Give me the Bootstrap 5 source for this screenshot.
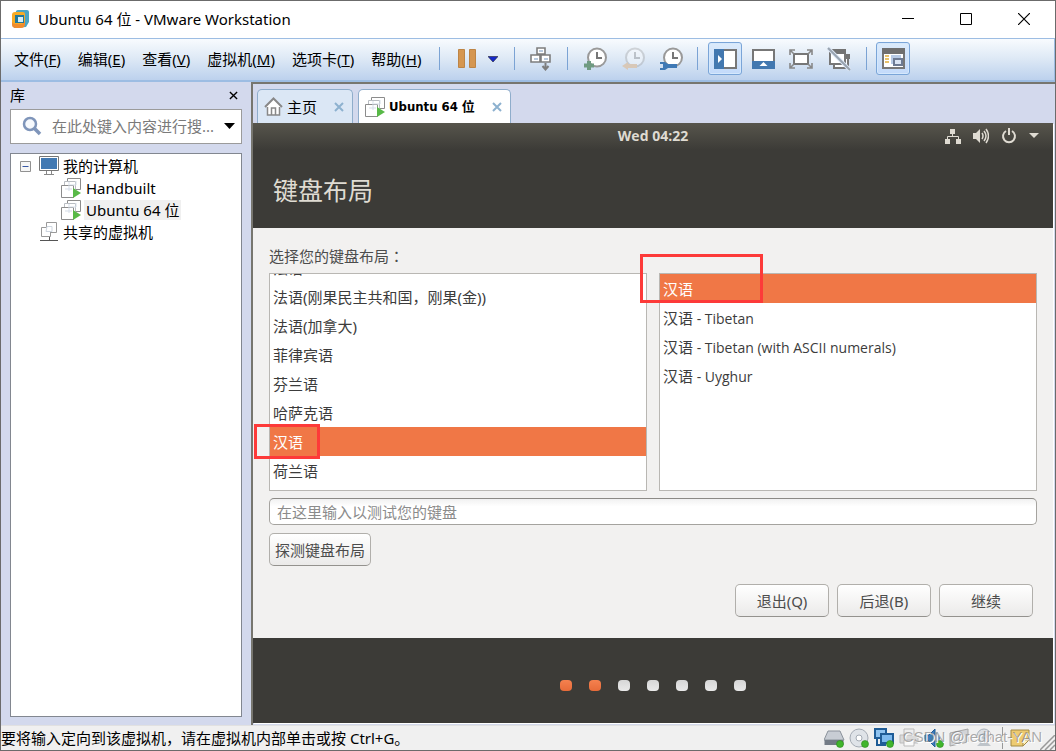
<!DOCTYPE html>
<html lang="zh-CN">
<head>
<meta charset="utf-8">
<meta name="viewport" content="width=device-width, initial-scale=1">
<title>Ubuntu 64 位 - VMware Workstation</title>
<link href="https://cdn.jsdelivr.net/npm/bootstrap@5.3.0/dist/css/bootstrap.min.css" rel="stylesheet">
<style>
body { font: 15px/20px "Noto Sans", "Noto Sans CJK SC", sans-serif; color: #000; background: #d3d9ed; }
button { color: inherit; font: inherit; background: none; border: 0; padding: 0; }
svg { display: block; flex: none; }
.app { border: 1px solid #6b6b6b; min-height: 100vh; }
.titlebar { height: 37px; padding: 0 2px 1px 10px; }
.caption-btn { width: 58px; height: 36px; display: grid; place-items: center; }
.toolbar { height: 44px; border: solid #9dbde3; border-width: 1px 1px 2px 0; background: linear-gradient(#f8fbfe, #dfeaf6 45%, #bcd1ed); padding: 0 0 2px 13px; }
.menus { gap: 17px; width: 417px; }
.tsep { width: 1px; height: 23px; background: #7ba3d4; }
.tool { width: 34px; height: 33px; display: grid; place-items: center; border-radius: 3px; }
.tool.on { border: 1px solid #7aa5d8; background: linear-gradient(#dcebfb, #c3dafa); box-shadow: inset 0 0 0 1px #d5e8fc; }
.power-tools { gap: 12px; margin: 0 16px 0 18px; }
.power-tools .tool { width: auto; }
.send-keys { margin: 0 9px; }
.snap-tools { gap: 4px; margin: 0 9px 0 10px; }
.view-tools { gap: 4px; margin: 0 10px; }
.library { width: 250px; padding: 0 9px 8px; }
.lib-head { height: 27px; padding-bottom: 1px; }
.search { height: 35px; border: 1px solid #9b9b9b; background: #fff; padding: 0 6px 1px 11px; }
.search input { border: 0; outline: 0; min-width: 0; padding: 0; margin-left: 10px; text-overflow: ellipsis; }
.search input::placeholder { color: #7a7a7a; opacity: 1; }
.tree { border: 1px solid #828790; background: #fff; margin-top: 9px; padding: 1px 9px; }
.tree li { height: 22px; }
.tree .vm-row { padding-left: 41px; gap: 3px; }
.tree .vm-name { padding: 0 2px; }
.tree .picked { background: #f0f0f0; }
.work { border: solid #77766f; border-width: 2px 0 0 2px; }
.tabs { height: 39px; padding-left: 4px; gap: 5px; }
.vtab { height: 34px; border: 1px solid #8fadcb; border-bottom: 0; border-radius: 5px 5px 0 0; background: #dbe7f5; padding: 0 8px 0 6px; }
.vtab a { margin: 0 17px 0 4px; }
.vtab button { color: #8db1cf; }
.vtab.current { background: #fff; font-family: "DejaVu Sans Condensed", "Noto Sans CJK SC", sans-serif; font-weight: 700; font-size: 13px; }
.guest { background: #3c3b37; color: #4c4c4c; margin: 0 2px 2px 0; box-shadow: 1px 1px 0 #fff; }
.panel-top { height: 27px; padding-bottom: 2px; background: linear-gradient(#57554c, #3c3b37); color: #dfdbd2; font-family: "Open Sans", sans-serif; font-weight: 700; font-size: 14px; }
.panel-icons { right: 14px; gap: 12px; }
.page-title { height: 78px; color: #dfdbd2; font-size: 25px; line-height: 30px; padding: 25px 20px 0; }
.page-body { background: #f2f1f0; padding: 18px 16px 21px; }
.tc { font-family: "Noto Sans CJK TC", sans-serif; }
.lists { gap: 12px; margin-top: 7px; }
.pick { border: 1px solid #b9b7b3; background: #fff; min-height: 216px; overflow: hidden; }
.pick .list-group-item { height: 29px; border: 0; padding: 5px 3px 4px; background: none; color: #3c3c3c; line-height: 20px; }
.pick .list-group-item.active { background: #f07746; color: #fff; margin-top: 0; }
.latin { font-size: 14px; font-family: "Open Sans", "Noto Sans CJK SC", sans-serif; }
.latin b { font-size: 15px; font-weight: 400; }
.scrolled { margin-top: -21px; }
.marker { border: 3px solid #fd3a39; z-index: 2; pointer-events: none; }
.marker-a { left: -15px; top: 151px; width: 66px; height: 35px; }
.marker-b { left: -19px; top: -19px; width: 123px; height: 49px; }
.probe { height: 27px; border: 1px solid #a5a39f; border-top-color: #8c8a86; border-radius: 5px; background: linear-gradient(#f1f1f1, #fff 30%); padding: 0 7px; margin-top: 7px; }
.probe::placeholder { color: #8b8b8b; opacity: 1; }
.gbtn { height: 33px; min-width: 94px; border: 1px solid #b1afab; border-bottom-color: #94928e; border-radius: 5px; background: linear-gradient(#fff, #ebeae9); padding: 0 5px; }
.page-nav { gap: 8px; margin-top: 18px; }
.steps { height: 85px; gap: 17px; padding: 10px 0 0; }
.step { width: 12px; height: 11px; border-radius: 4px; background: linear-gradient(#d6d6d6, #e9e9e9); }
.step.done { background: linear-gradient(#f5814f, #e76b39); }
.status { height: 25px; background: #f0f0f0; padding-right: 24px; border-top: 1px solid #e1e1e1; }
.watermark { right: 13px; top: 0; color: #77777799; font: 15px/22px "Liberation Sans", sans-serif; text-shadow: 1px 1px 0 #fff; }
.grip { right: 0; bottom: 0; }
</style>
</head>
<body>
<svg width="0" height="0" class="position-absolute" aria-hidden="true">
  <symbol id="vm" viewBox="0 0 20 20"><g fill="#fff" stroke="#8c8c8c"><path d="M6.500 .5h13v11h-13z"/><path d="M3.500 3.500h11v11h-11z" stroke="#b9bdc2"/><path d="M.5 7.500h12v12H.5z"/></g><path d="M8 4v9M4 11h7M9 7h6V3" stroke="#d5dde8" fill="none"/><path d="M12 10l8 5-8 5z" fill="#58b947"/></symbol>
  <symbol id="clock" viewBox="0 0 24 24"><circle cx="14" cy="10.500" r="9" fill="#fff" stroke="#999" stroke-width="2"/><path d="M14 5v6h5" fill="none" stroke="#777" stroke-width="2"/></symbol>
  <symbol id="x" viewBox="0 0 10 10"><path d="M1 1l8 8M9 1L1 9" stroke="currentColor" stroke-width="2" fill="none"/></symbol>
  <symbol id="ok" viewBox="0 0 8 8"><circle cx="4" cy="4" r="3.500" fill="#41b52c" stroke="#2c8a1c" stroke-width=".6"/></symbol>
</svg>
<div class="app d-flex flex-column text-nowrap">
  <header class="titlebar d-flex align-items-center bg-white">
    <svg width="19" height="19" viewBox="0 0 19 19"><path d="M5 1q1-1 2-1h9q2 0 2 2v10l-3 5-12 1z" fill="#4aa5c4"/><path d="M1 5q0-3 3-3h8q2 0 2 2v9q0 3-3 3H4q-3 0-3-3z" fill="#f6ab25"/><path d="M1 12q1 2 4 2h6l3-3v3q0 4-4 4H5q-4 0-4-3z" fill="#f08c2d"/><path d="M4 5h9v8H4z" fill="#1f789b"/><path d="M7 7h5v5H7z" fill="#d8edf5"/></svg>
    <span class="ms-1 ps-1">Ubuntu 64 位 - VMware Workstation</span>
    <div class="ms-auto d-flex">
      <button class="caption-btn" aria-label="最小化"><svg width="12" height="12"><path d="M0 5.500h12" stroke="#000"/></svg></button>
      <button class="caption-btn" aria-label="最大化"><svg width="12" height="12"><path d="M.5.5h11v11H.5z" fill="none" stroke="#000"/></svg></button>
      <button class="caption-btn" aria-label="关闭"><svg width="12" height="12"><path d="M0 0l12 12M12 0L0 12" stroke="#000" stroke-width="1.200"/></svg></button>
    </div>
  </header>

  <div class="toolbar d-flex align-items-center">
    <nav class="menus d-flex">
      <button>文件(<u>F</u>)</button><button>编辑(<u>E</u>)</button><button>查看(<u>V</u>)</button><button>虚拟机(<u>M</u>)</button><button>选项卡(<u>T</u>)</button><button>帮助(<u>H</u>)</button>
    </nav>
    <span class="tsep ms-2"></span>
    <div class="power-tools d-flex">
      <button class="tool" aria-label="挂起"><svg width="18" height="19"><path d="M.5.5h6v18h-6zM11.500.5h6v18h-6z" fill="#d59650" stroke="#bd8445"/></svg></button>
      <button class="tool" aria-label="电源选项"><svg width="10" height="6"><path d="M0 .5h10L5 6z" fill="#1529c9" stroke="#223" stroke-width=".6"/></svg></button>
    </div>
    <span class="tsep"></span>
    <button class="tool send-keys" aria-label="发送 Ctrl+Alt+Del"><svg width="22" height="24" viewBox="0 0 22 24"><g fill="#fff" stroke="#7d7d7d" stroke-width="1.600"><path d="M7 1h8v6H7zM1 8h9v7H1zM11 8h9v7h-9z"/></g><path d="M9 4h4M4 12h4M14 12h4" stroke="#b9cbe0" stroke-width="2"/><path d="M15.500 16v6m-3-3l3 3.500 3-3.500" stroke="#7d7d7d" fill="none" stroke-width="2"/></svg></button>
    <span class="tsep"></span>
    <div class="snap-tools d-flex">
      <button class="tool" aria-label="拍摄快照"><svg width="24" height="24"><use href="#clock"/><path d="M6 14v9M1 18.500h10" stroke="#709b82" stroke-width="4"/></svg></button>
      <button class="tool" aria-label="恢复快照"><svg width="24" height="24"><use href="#clock" opacity=".35"/><path d="M1 19l6-4v2h9v4H7v2z" fill="#d8c8b8"/></svg></button>
      <button class="tool" aria-label="管理快照"><svg width="24" height="24"><use href="#clock"/><path d="M1 15h5l3 2h9v4H9l-3 2H1v-2h3v-4H1z" fill="#3f79b5"/></svg></button>
    </div>
    <span class="tsep"></span>
    <div class="view-tools d-flex">
      <button class="tool on" aria-label="显示库"><svg width="23" height="20"><path d="M1 1h21v18H1z" fill="#fff" stroke="#777" stroke-width="2"/><path d="M0 0h10v20H0z" fill="#4278b0"/><path d="M4 6l4 4-4 4z" fill="#fff"/></svg></button>
      <button class="tool" aria-label="缩略图栏"><svg width="23" height="20"><path d="M1 1h21v18H1z" fill="#fff" stroke="#777" stroke-width="2"/><path d="M0 12h23v8H0z" fill="#4278b0"/><path d="M7.500 17l4-4 4 4z" fill="#fff"/></svg></button>
      <button class="tool" aria-label="全屏"><svg width="24" height="20"><path d="M5 5h14v10H5z" fill="#fff" stroke="#777" stroke-width="2"/><path d="M1 6V1h5M18 1h5v5M23 14v5h-5M6 19H1v-5M1 1l4 4M23 1l-4 4M1 19l4-4M23 19l-4-4" fill="none" stroke="#888" stroke-width="1.600"/></svg></button>
      <button class="tool" aria-label="Unity"><svg width="24" height="24"><path d="M7 9h14v12H7z" fill="#fff" stroke="#777" stroke-width="2"/><path d="M17 7h6v5h-6z" fill="#737373"/><path d="M3 4h15v13H3z" fill="#fff" stroke="#777" stroke-width="2"/><path d="M2 2h17v5H2z" fill="#737373"/><path d="M1 1l22 22" stroke="#dce7f4" stroke-width="4"/><path d="M1 1l22 22" stroke="#98a3af" stroke-width="2"/></svg></button>
    </div>
    <span class="tsep"></span>
    <button class="tool on send-keys" aria-label="控制台视图"><svg width="23" height="21"><path d="M1 1h21v19H1z" fill="#fff" stroke="#777" stroke-width="2"/><path d="M0 0h23v6H0z" fill="#6f6f6f"/><path d="M3 8h4M3 11h4M3 14h4" stroke="#e8c26a" stroke-width="2"/><path d="M9 7h10v9H9z" fill="#b7cae5"/><path d="M12 11h8v6h-8z" fill="#dbe5f4" stroke="#6d7a92" stroke-width="2"/></svg></button>
  </div>

  <main class="d-flex flex-grow-1">
    <aside class="library d-flex flex-column flex-shrink-0">
      <div class="lib-head d-flex align-items-center justify-content-between"><span>库</span>
        <button class="pe-1" aria-label="关闭库"><svg width="9" height="9" viewBox="0 0 10 10"><path d="M1 1l8 8M9 1L1 9" stroke="#000" stroke-width="1.500"/></svg></button></div>
      <div class="search d-flex align-items-center">
        <svg width="20" height="20"><circle cx="8" cy="8" r="6" fill="#f6f9fd" stroke="#7f95ba" stroke-width="2.500"/><path d="M12 12l6 6" stroke="#7f95ba" stroke-width="3.500"/></svg>
        <input class="flex-grow-1" type="text" aria-label="搜索" placeholder="在此处键入内容进行搜...">
        <button class="ms-1" aria-label="搜索选项"><svg width="11" height="6"><path d="M0 0h11L5.500 6z"/></svg></button>
      </div>
      <ul class="tree list-unstyled mb-0 flex-grow-1">
        <li class="d-flex align-items-center"><svg width="11" height="11"><path d="M.5.5h10v10H.5z" fill="#f6f6f6" stroke="#919191"/><path d="M2.500 5.500h6" stroke="#3858a5"/></svg>
          <svg class="ms-2" width="20" height="20"><path d="M.5.5h19v14H.5z" fill="#fff" stroke="#777"/><path d="M2 2h16v11H2z" fill="#4279b2"/><path d="M7.500 15v3M12.500 15v3M5 18.500h10" stroke="#888"/></svg><span class="ms-1">我的计算机</span></li>
        <li class="vm-row d-flex align-items-center"><svg width="20" height="20"><use href="#vm"/></svg><span class="vm-name">Handbuilt</span></li>
        <li class="vm-row d-flex align-items-center"><svg width="20" height="20"><use href="#vm"/></svg><span class="vm-name picked">Ubuntu 64 位</span></li>
        <li class="d-flex align-items-center ps-3"><span class="ms-1"></span><svg width="19" height="20"><g fill="#fff" stroke="#999"><path d="M6.500.5h10v10h-10z"/><path d="M1.500 5.500h9v9h-9z"/><path d="M7 4.500h5v5H6z" stroke="#cdd5df"/></g><path d="M0 18.500h18M9.500 15v4" stroke="#555"/></svg><span class="ms-1">共享的虚拟机</span></li>
      </ul>
    </aside>

    <section class="work flex-grow-1 d-flex flex-column">
      <div class="tabs d-flex align-items-end">
        <div class="vtab d-flex align-items-center"><svg width="19" height="19"><path d="M3.500 9v9h12V9" fill="#fff" stroke="#888" stroke-width="1.500"/><path d="M1 10L9.500 1.500 18 10" fill="#fff" stroke="#888" stroke-width="2"/><path d="M7.500 18v-7h4v7" fill="none" stroke="#888" stroke-width="1.500"/></svg>
          <a href="#" class="text-reset text-decoration-none">主页</a><button aria-label="关闭主页"><svg width="10" height="10"><use href="#x"/></svg></button></div>
        <div class="vtab current d-flex align-items-center"><svg width="20" height="20"><use href="#vm"/></svg>
          <a href="#" class="text-reset text-decoration-none">Ubuntu 64 位</a><button aria-label="关闭 Ubuntu"><svg width="10" height="10"><use href="#x"/></svg></button></div>
      </div>
      <div class="guest flex-grow-1 d-flex flex-column">
        <div class="panel-top position-relative d-flex align-items-center justify-content-center">Wed 04:22
          <div class="panel-icons position-absolute d-flex align-items-center">
            <svg width="16" height="16" fill="#dfdbd2"><path d="M5 1h5v5H5zM0 11h5v5H0zM11 11h5v5h-5z"/><path d="M7.500 6v3M2.500 11V8.500h11V11" fill="none" stroke="#dfdbd2"/></svg>
            <svg width="16" height="16"><path d="M0 5h3l4-4v14l-4-4H0z" fill="#dfdbd2"/><path d="M9 5q2 3 0 6M11 3q4 5 0 10M13 1q5 7 0 14" fill="none" stroke="#dfdbd2" stroke-width="1.500"/></svg>
            <svg width="16" height="16"><path d="M5 3a6 6 0 1 0 6 0M8 0v7" fill="none" stroke="#dfdbd2" stroke-width="2"/></svg>
            <svg width="10" height="5"><path d="M0 0h10L5 5z" fill="#dfdbd2"/></svg>
          </div>
        </div>
        <h1 class="page-title m-0 fw-normal">键盘布局</h1>
        <div class="page-body flex-grow-1 d-flex flex-column">
          <div>选择您的键盘布局<span class="tc" lang="zh-TW">：</span></div>
          <div class="lists d-flex flex-grow-1">
            <div class="position-relative flex-fill w-50 d-flex">
              <div class="pick w-100">
                <div class="list-group list-group-flush scrolled">
                  <button class="list-group-item list-group-item-action">法语</button>
                  <button class="list-group-item list-group-item-action">法语(刚果民主共和国，刚果(金))</button>
                  <button class="list-group-item list-group-item-action">法语(加拿大)</button>
                  <button class="list-group-item list-group-item-action">菲律宾语</button>
                  <button class="list-group-item list-group-item-action">芬兰语</button>
                  <button class="list-group-item list-group-item-action">哈萨克语</button>
                  <button class="list-group-item list-group-item-action active">汉语</button>
                  <button class="list-group-item list-group-item-action">荷兰语</button>
                </div>
              </div>
              <span class="marker marker-a position-absolute"></span>
            </div>
            <div class="position-relative flex-fill w-50 d-flex">
              <div class="pick w-100">
                <div class="list-group list-group-flush">
                  <button class="list-group-item list-group-item-action active">汉语</button>
                  <button class="list-group-item list-group-item-action latin"><b>汉语</b> - Tibetan</button>
                  <button class="list-group-item list-group-item-action latin"><b>汉语</b> - Tibetan (with ASCII numerals)</button>
                  <button class="list-group-item list-group-item-action latin"><b>汉语</b> - Uyghur</button>
                </div>
              </div>
              <span class="marker marker-b position-absolute"></span>
            </div>
          </div>
          <input class="probe w-100" type="text" aria-label="测试键盘" placeholder="在这里输入以测试您的键盘">
          <div class="mt-2"><button class="gbtn">探测键盘布局</button></div>
          <div class="page-nav d-flex justify-content-end pe-1">
            <button class="gbtn">退出(Q)</button><button class="gbtn">后退(B)</button><button class="gbtn">继续</button>
          </div>
        </div>
        <div class="steps d-flex align-items-center justify-content-center">
          <i class="step done"></i><i class="step done"></i><i class="step"></i><i class="step"></i><i class="step"></i><i class="step"></i><i class="step"></i>
        </div>
      </div>
    </section>
  </main>

  <footer class="status position-relative d-flex align-items-center">
    <span>要将输入定向到该虚拟机，请在虚拟机内部单击或按 Ctrl+G。</span>
    <div class="ms-auto d-flex align-items-center gap-1">
      <svg width="21" height="20"><path d="M4 3h12l4 9H0z" fill="#c8cdd4" stroke="#8b929b"/><path d="M.5 12h19v5H.5z" fill="#737b86"/><use href="#ok" x="12" y="12" width="8" height="8"/></svg>
      <svg width="21" height="20"><circle cx="10" cy="10" r="9" fill="#dfe3e8" stroke="#a4abb4"/><circle cx="10" cy="10" r="3" fill="#fff" stroke="#a4abb4"/><use href="#ok" x="12" y="12" width="8" height="8"/></svg>
      <svg width="21" height="20"><path d="M1 1h11v9H1z" fill="#8fc3f0" stroke="#1f5c96" stroke-width="2"/><path d="M7 6h12v9H7z" fill="#7db9ee" stroke="#1f5c96" stroke-width="2"/><path d="M3 11v6h9" fill="none" stroke="#1f5c96" stroke-width="2"/><use href="#ok" x="12" y="12" width="8" height="8"/></svg>
      <svg width="21" height="20" opacity=".6"><path d="M5 1h10v7H5z" fill="#eee" stroke="#999"/><path d="M1 7h18v8H1z" fill="#ccc" stroke="#999"/><path d="M5 12h10v6H5z" fill="#fff" stroke="#999"/></svg>
      <svg width="21" height="20"><path d="M1 7h4l6-6v18l-6-6H1z" fill="#3d7dba" stroke="#1f5c96"/><path d="M13 5q4 5 0 9" stroke="#4a8ac8" stroke-width="2" fill="none"/><use href="#ok" x="12" y="12" width="8" height="8"/></svg>
      <svg width="21" height="20" opacity=".7"><path d="M1 5l18-4v13L1 18z" fill="#c6c9cd" stroke="#888"/></svg>
      <svg width="21" height="20" opacity=".7"><circle cx="10" cy="8" r="7" fill="#d5dae0" stroke="#8a96a3"/><circle cx="10" cy="8" r="3" fill="#9cb0c6"/><path d="M3 18h14l-3-3H6z" fill="#aab2bb"/></svg>
      <svg width="7" height="22"><path d="M3.500 0v22" stroke="#999"/></svg>
      <svg width="21" height="20"><path d="M1 2h18v10l-6 6H1z" fill="#eecb70" stroke="#a38a45"/><path d="M19 12h-6v6z" fill="#fff0bd" stroke="#a38a45"/></svg>
    </div>
    <span class="watermark position-absolute">CSDN @redhat-YAN</span>
    <svg class="grip position-absolute" width="15" height="15"><path d="M0 15L15 0M5 15L15 5M10 15l5-5" stroke="#999" stroke-width="1.500"/></svg>
  </footer>
</div>
<script src="https://cdn.jsdelivr.net/npm/bootstrap@5.3.0/dist/js/bootstrap.bundle.min.js"></script>
</body>
</html>
